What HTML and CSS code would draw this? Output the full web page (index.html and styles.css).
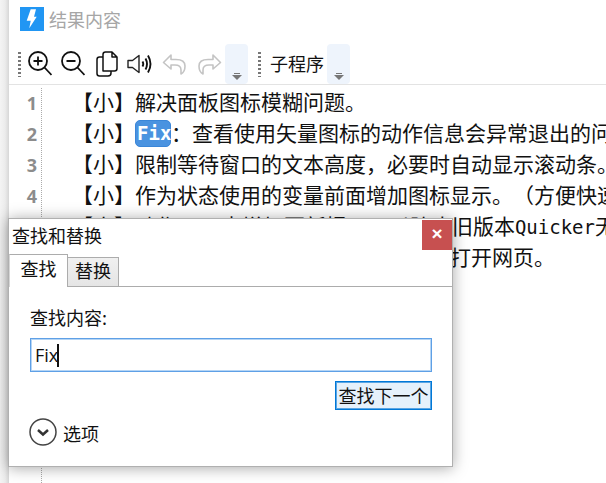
FILE: index.html
```html
<!DOCTYPE html>
<html lang="zh">
<head>
<meta charset="utf-8">
<title>结果内容</title>
<link rel="stylesheet" href="styles.css">
</head>
<body>
<div class="window">
  <header class="titlebar">
    <svg class="logo" viewBox="0 0 24 24"><rect width="24" height="24" fill="#2196f3"/><path d="M10.700 2.300 H16 L14 9.700 H16.700 L9.300 21.300 L10.700 13.700 H6.700 Z" fill="#fff"/></svg>
    <span class="title">结果内容</span>
  </header>
  <div class="toolbar">
    <span class="grip"></span>
    <svg class="tool t-zoom" viewBox="0 0 24 26"><circle cx="10" cy="10" r="9" class="s"/><path d="M5.500 10h9M10 5.500v9M16.500 16.500l7 7.500" class="s"/></svg>
    <svg class="tool t-zoom" viewBox="0 0 24 26"><circle cx="10" cy="10" r="9" class="s"/><path d="M5.500 10h9M16.500 16.500l7 7.500" class="s"/></svg>
    <svg class="tool t-copy" viewBox="0 0 22 26"><path d="M7 20V3.500Q7 1 9.500 1H16L21 6V17.500Q21 20 18.500 20Z M16 1V6H21" class="c"/><path d="M7 6H3.500Q1 6 1 8.500V22.500Q1 25 3.500 25H12Q15 25 15 22V20" class="c"/></svg>
    <svg class="tool t-sound" viewBox="0 0 25 24"><path d="M1 8.500H5.500L12 3.500V20.500L5.500 15.500H1Z" class="thin"/><path d="M15.500 9.500Q17 12 15.500 14.500M18.500 6.500Q21.500 12 18.500 17.500M21 3.500Q26 12 21 20.500" class="wave"/></svg>
    <svg class="tool t-arrow" viewBox="0 0 24 24"><path d="M9 3 L1.500 10.500 L9 17 V13 H13 Q19 13 19 18 V22 Q23 20 23 14 Q23 7.500 14 7.500 H9 Z" class="off"/></svg>
    <svg class="tool t-arrow flip" viewBox="0 0 24 24"><path d="M9 3 L1.500 10.500 L9 17 V13 H13 Q19 13 19 18 V22 Q23 20 23 14 Q23 7.500 14 7.500 H9 Z" class="off"/></svg>
    <span class="drop"><i class="dash"></i><i class="tri"></i></span>
    <span class="grip grip-b"></span>
    <span class="label">子程序</span>
    <span class="drop"><i class="dash"></i><i class="tri"></i></span>
  </div>
  <div class="editor">
    <div class="gutter">
      <span>1</span><span>2</span><span>3</span><span>4</span>
    </div>
    <div class="lines">
      <p>【小】解决面板图标模糊问题。</p>
      <p>【小】<b class="hit">Fix</b>：查看使用矢量图标的动作信息会异常退出的问题。</p>
      <p>【小】限制等待窗口的文本高度，必要时自动显示滚动条。</p>
      <p>【小】作为状态使用的变量前面增加图标显示。（方便快速识别）</p>
      <p>【小】动作<span class="mono">10</span>天内增加更新提示，以防止旧版本<span class="mono">Quicker</span>无法使用。</p>
      <p>【小】动作页面增加按钮，可在浏览器中打开网页。</p>
    </div>
  </div>
</div>

<section class="dialog">
  <div class="dlg-head">
    <span class="dlg-title">查找和替换</span>
    <span class="close">×</span>
  </div>
  <div class="tabs">
    <span class="tab active">查找</span>
    <span class="tab">替换</span>
  </div>
  <div class="panel">
    <div class="field-label">查找内容:</div>
    <div class="input"><span>Fix</span><i class="caret"></i></div>
    <div class="actions"><span class="btn">查找下一个</span></div>
    <div class="options">
      <svg class="chev" viewBox="0 0 28 28"><circle cx="14" cy="14" r="13" fill="none" stroke="#444" stroke-width="1.500"/><path d="M9 12l5 4.500 5-4.500" fill="none" stroke="#333" stroke-width="2.500"/></svg>
      <span class="opt-text">选项</span>
    </div>
  </div>
</section>
</body>
</html>
```
FILE: styles.css
```css
* { box-sizing: border-box; }
html, body { margin: 0; height: 100%; }
body {
  width: 606px;
  height: 483px;
  overflow: hidden;
  background: linear-gradient(90deg, #f4f4f4 0, #ececec 5px, #dcdcdc 8px, #d6d6d6 9px);
  font-family: "Noto Sans CJK SC", "Noto Sans", sans-serif;
  color: #111;
  text-spacing-trim: space-all;
}
.window {
  margin-left: 9px;
  height: 483px;
  background: #fff;
  display: flex;
  flex-direction: column;
  overflow: hidden;
}
.titlebar {
  height: 44px;
  padding: 7px 0 0 11px;
  display: flex;
  align-items: flex-start;
  gap: 5px;
  flex: none;
}
.logo { width: 24px; height: 24px; flex: none; }
.title { font-size: 18px; line-height: 26px; margin-top: -1px; color: #a6a6a6; }
.toolbar {
  height: 41px;
  flex: none;
  display: flex;
  align-items: center;
  padding-left: 9px;
  border-bottom: 1px solid #e3e3e3;
}
.grip {
  width: 3px;
  height: 25px;
  background: repeating-linear-gradient(180deg, #777 0 2px, transparent 2px 4px);
  flex: none;
}
.grip-b { margin-left: 10px; }
.tool { flex: none; display: block; }
.s { fill: none; stroke: #111; stroke-width: 1.800; stroke-linejoin: round; }
.c { fill: none; stroke: #111; stroke-width: 1.500; stroke-linejoin: round; }
.thin { fill: none; stroke: #222; stroke-width: 1.400; stroke-linejoin: round; }
.wave { fill: none; stroke: #111; stroke-width: 1.900; }
.off { fill: none; stroke: #c4c4c4; stroke-width: 1.600; stroke-linejoin: round; }
.t-zoom { width: 24px; height: 26px; margin-left: 7px; margin-right: 2px; }
.t-zoom + .t-zoom { margin-left: 7px; }
.t-copy { width: 22px; height: 26px; margin-left: 9px; }
.t-sound { width: 25px; height: 24px; margin-left: 9px; }
.t-arrow { width: 24px; height: 24px; margin-left: 10px; }
.flip { transform: scaleX(-1); margin-left: 12px; }
.drop {
  width: 23px;
  height: 40px;
  margin-left: 3px;
  background: #eef4fc;
  border-radius: 4px;
  flex: none;
  display: flex;
  flex-direction: column;
  align-items: center;
  justify-content: flex-end;
  padding-bottom: 4px;
  gap: 1px;
}
.dash { width: 6px; height: 1px; background: #777; }
.tri {
  width: 0;
  height: 0;
  border-left: 5px solid transparent;
  border-right: 5px solid transparent;
  border-top: 5px solid #777;
}
.label { font-size: 18px; margin-left: 9px; line-height: 26px; margin-top: -3px; color: #111; }
.editor { flex: 1; display: flex; padding-top: 3px; min-width: 0; }
.gutter {
  width: 33px;
  flex: none;
  border-right: 1px dotted #aaa;
  display: flex;
  flex-direction: column;
  padding-right: 4px;
  text-align: right;
  font: bold 18px/31px "Open Sans", sans-serif;
  color: #8c8c8c;
  height: 395px;
}
.lines { padding-left: 30px; margin-top: -2px; white-space: nowrap; font-size: 21px; line-height: 31px; min-width: 0; flex: 1; overflow: hidden; }
.lines p { margin: 0; height: 31px; }
.hit {
  display: inline-block;
  height: 27px;
  width: 36px;
  vertical-align: 1px;
  padding-left: 1px;
  background: #4a93e0;
  border: 1px solid #3a86d8;
  border-radius: 5px;
  color: #fff;
  font: bold 19px/24px "DejaVu Sans Mono", monospace;
}
.mono { font-family: "DejaVu Sans Mono", monospace; font-size: 19px; }
.dialog {
  position: absolute;
  left: 8px;
  top: 218px;
  width: 445px;
  height: 249px;
  background: #fff;
  border: 1px solid #b0b0b0;
  box-shadow: 0 1px 14px rgba(0, 0, 0, .35);
  display: flex;
  flex-direction: column;
}
.dlg-head { height: 36px; flex: none; display: flex; justify-content: space-between; align-items: flex-start; }
.dlg-title { font-size: 18px; margin: 3px 0 0 3px; line-height: 26px; }
.close {
  width: 30px;
  height: 30px;
  margin-top: 1px;
  background: #c75050;
  color: #fff;
  font: bold 19px/28px "Liberation Sans", sans-serif;
  text-align: center;
}
.tabs { display: flex; height: 32px; flex: none; align-items: flex-end; margin-bottom: -1px; position: relative; }
.tab {
  font-size: 18px;
  line-height: 25px;
  height: 30px;
  width: 51px;
  text-align: center;
  background: linear-gradient(#f0f0f0, #e5e5e5);
  border: 1px solid #acacac;
  border-left: 0;
  color: #111;
}
.tab.active {
  width: 59px;
  height: 33px;
  background: #fff;
  border-bottom: 0;
  border-left: 1px solid #d6d6d6;
  line-height: 27px;
}
.panel {
  flex: 1;
  border-top: 1px solid #acacac;
  padding: 16px 20px 0 21px;
  display: flex;
  flex-direction: column;
}
.field-label { font-size: 18px; line-height: 28px; }
.input {
  height: 34px;
  margin-top: 7px;
  border: 1px solid #5fa0e6;
  box-shadow: inset 0 0 0 1px #b5d5f5;
  padding-left: 4px;
  display: flex;
  align-items: center;
  font: 18px/30px "Open Sans", sans-serif;
}
.caret { width: 2px; height: 23px; background: #111; margin-left: -1px; }
.actions { display: flex; justify-content: flex-end; margin-top: 9px; }
.btn {
  width: 97px;
  height: 29px;
  border: 1px solid #0078d7;
  box-shadow: inset 0 0 0 1px #5aa5e3;
  background: #e5f1fb;
  font-size: 18px;
  line-height: 26px;
  text-align: center;
  white-space: nowrap;
}
.options { display: flex; align-items: center; gap: 6px; margin: 8px 0 0 -1px; font-size: 18px; }
.chev { width: 28px; height: 28px; flex: none; }
.opt-text { margin-top: 1px; }
```
